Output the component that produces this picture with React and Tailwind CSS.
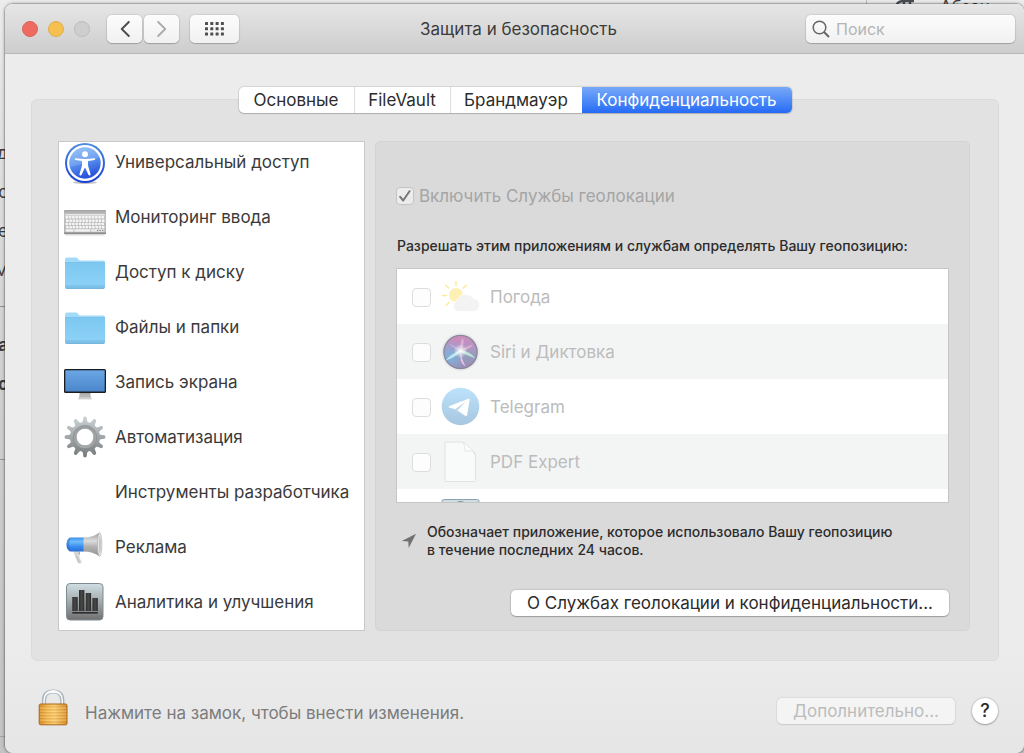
import React from "react";

function AccessibilityIcon() {
  return (
    <svg viewBox="0 0 42 40" className="h-10 w-[42px] overflow-visible" aria-hidden="true">
      <defs>
        <linearGradient id="accFill" x1="0" y1="0" x2="0.3" y2="1">
          <stop offset="0" stopColor="#8fc0f6" />
          <stop offset="0.5" stopColor="#5f97f0" />
          <stop offset="1" stopColor="#2a55dc" />
        </linearGradient>
        <linearGradient id="accRim" x1="0" y1="0" x2="0" y2="1">
          <stop offset="0" stopColor="#4f8ce0" />
          <stop offset="1" stopColor="#1a3fd0" />
        </linearGradient>
      </defs>
      <ellipse cx="21" cy="39.6" rx="12" ry="1.4" fill="#000" opacity="0.25" />
      <circle cx="21" cy="20" r="20" fill="url(#accRim)" />
      <circle cx="21" cy="20" r="18" fill="#fff" />
      <circle cx="21" cy="20" r="15.7" fill="url(#accFill)" />
      <path d="M6 24C16 22 27 18 36 14A15.7 15.7 0 0 0 6 18Z" fill="#fff" opacity="0.13" />
      <circle cx="21" cy="11.2" r="3" fill="#fff" />
      <path d="M11.5 15.3Q21 16.8 30.5 15.3Q31.3 15.3 31.3 16Q31.2 16.7 30.5 16.9L24 18V22.5L26.6 31.3Q26.6 32.5 25.5 32.5Q24.700 32.500 24.400 31.700L21.300 25H20.700L17.600 31.700Q17.300 32.500 16.500 32.500Q15.400 32.500 15.400 31.300L18 22.500V18L11.500 16.900Q10.800 16.700 10.700 16Q10.700 15.300 11.500 15.300Z" fill="#fff" />
    </svg>
  );
}

function KeyboardIcon() {
  const rows = [0, 1, 2, 3];
  const keys = [0, 1, 2, 3, 4, 5, 6, 7, 8, 9, 10, 11];
  return (
    <svg viewBox="0 0 42 40" className="h-10 w-[42px] overflow-visible" aria-hidden="true">
      <defs>
        <linearGradient id="kbFill" x1="0" y1="0" x2="0" y2="1">
          <stop offset="0" stopColor="#a3a3a3" />
          <stop offset="0.2" stopColor="#c4c4c4" />
          <stop offset="1" stopColor="#b4b4b4" />
        </linearGradient>
      </defs>
      <rect x="1" y="35" width="40" height="2.5" rx="1" fill="#000" opacity="0.15" />
      <rect x="0" y="12" width="42" height="24" rx="1" fill="url(#kbFill)" />
      <rect x="0" y="34.500" width="42" height="1.500" fill="#8e8e8e" />
      <rect x="1.500" y="16.200" width="39" height="1.200" fill="#f0f0f0" />
      {rows.map((r) =>
        keys.map((k) => (
          <rect key={`${r}-${k}`} x={1.6 + k * 3.26 + (r % 2) * 0.5} y={18.1 + r * 3.3} width="2.500" height="2.500" rx="0.400" fill="#f6f6f6" />
        ))
      )}
      <rect x="1.600" y="31.300" width="8" height="2.400" fill="#f4f4f4" />
      <rect x="10.300" y="31.300" width="16" height="2.400" fill="#f4f4f4" />
      <rect x="27" y="31.300" width="13.400" height="2.400" fill="#eee" />
      <path d="M33 32.500h1.500M35.500 32.500H37M38 32.500h1.500" stroke="#777" strokeWidth="0.800" />
    </svg>
  );
}

function FolderIcon() {
  return (
    <svg viewBox="0 0 42 40" className="h-10 w-[42px] overflow-visible" aria-hidden="true">
      <defs>
        <linearGradient id="folderFill" x1="0" y1="0" x2="0" y2="1">
          <stop offset="0" stopColor="#7cc8f1" />
          <stop offset="1" stopColor="#8fd2f7" />
        </linearGradient>
      </defs>
      <path d="M1 7V6.500Q1 4.500 3 4.500H12Q13.500 4.500 14.300 6Q15 7.500 16.500 7.500H39Q41 7.500 41 9.500V33Q41 35.500 39 35.500H3Q1 35.500 1 33Z" fill="#a3daf8" />
      <path d="M1 9.500H41V33.500Q41 35.800 39 35.800H3Q1 35.800 1 33.500Z" fill="url(#folderFill)" />
      <path d="M1 9.500H41" stroke="#72bde6" strokeWidth="0.700" />
      <path d="M1 32H41V33.500Q41 35.800 39 35.800H3Q1 35.800 1 33.500Z" fill="#7fc3e8" />
      <path d="M1.500 34.700Q2 35.800 3 35.800H39Q40 35.800 40.500 34.700Z" fill="#70b0d6" />
    </svg>
  );
}

function DisplayIcon() {
  return (
    <svg viewBox="0 0 42 40" className="h-10 w-[42px] overflow-visible" aria-hidden="true">
      <defs>
        <linearGradient id="screenFill" x1="0" y1="0" x2="0" y2="1">
          <stop offset="0" stopColor="#6ba6e6" />
          <stop offset="1" stopColor="#4a86c9" />
        </linearGradient>
        <linearGradient id="standFill" x1="0" y1="0" x2="0" y2="1">
          <stop offset="0" stopColor="#9c9c9c" />
          <stop offset="1" stopColor="#d9d9d9" />
        </linearGradient>
      </defs>
      <path d="M15.500 29H26.500V33L28 36.500H14L15.500 33Z" fill="url(#standFill)" />
      <path d="M15 33.500H27" stroke="#b0b0b0" strokeWidth="0.700" />
      <rect x="0" y="6" width="42" height="24" rx="1.500" fill="#1b1d20" />
      <rect x="1.300" y="7.300" width="39.400" height="21.200" fill="url(#screenFill)" />
    </svg>
  );
}

function GearIcon() {
  const teeth = [0, 30, 60, 90, 120, 150, 180, 210, 240, 270, 300, 330];
  return (
    <svg viewBox="0 0 42 40" className="h-10 w-[42px] overflow-visible" aria-hidden="true">
      <defs>
        <linearGradient id="gearFill" gradientUnits="userSpaceOnUse" x1="0" y1="0" x2="0" y2="40">
          <stop offset="0" stopColor="#c8d0d3" />
          <stop offset="0.5" stopColor="#a0a5a7" />
          <stop offset="1" stopColor="#747778" />
        </linearGradient>
        <linearGradient id="gearRing" x1="0" y1="0" x2="0" y2="1">
          <stop offset="0" stopColor="#989fa1" />
          <stop offset="1" stopColor="#a6a9aa" />
        </linearGradient>
        <mask id="gearMask">
          <rect x="-2" y="-2" width="46" height="44" fill="#fff" />
          <circle cx="21" cy="19" r="8.800" fill="#000" />
        </mask>
        <mask id="gearTeeth">
          <circle cx="21" cy="19" r="15" fill="#fff" />
          {teeth.map((a) => (
            <path key={a} d="M17.600 5.500Q19 4 19.300 -0.300Q19.500 -1.400 21 -1.400Q22.500 -1.400 22.700 -0.300Q23 4 24.400 5.500Z" fill="#fff" transform={`rotate(${a} 21 19)`} />
          ))}
        </mask>
      </defs>
      <g mask="url(#gearMask)">
        <rect x="-1" y="-2" width="44" height="43" fill="url(#gearFill)" mask="url(#gearTeeth)" />
        <circle cx="21" cy="19" r="10.200" fill="none" stroke="url(#gearRing)" strokeWidth="2.800" />
        <circle cx="21" cy="19" r="11.800" fill="none" stroke="#6f7577" strokeWidth="0.600" opacity="0.600" />
      </g>
      <circle cx="21" cy="19" r="8.800" fill="none" stroke="#858a8c" strokeWidth="0.600" />
    </svg>
  );
}

function MegaphoneIcon() {
  return (
    <svg viewBox="0 0 42 40" className="h-10 w-[42px] overflow-visible" aria-hidden="true">
      <defs>
        <linearGradient id="megaBlue" x1="0" y1="0" x2="0" y2="1">
          <stop offset="0" stopColor="#3d8fe6" />
          <stop offset="0.3" stopColor="#6fbdfa" />
          <stop offset="0.65" stopColor="#3a8df0" />
          <stop offset="1" stopColor="#2a6ed2" />
        </linearGradient>
        <linearGradient id="megaGrey" x1="0" y1="0" x2="0" y2="1">
          <stop offset="0" stopColor="#9a9a9a" />
          <stop offset="0.35" stopColor="#dcdcdc" />
          <stop offset="0.6" stopColor="#b0b0b0" />
          <stop offset="1" stopColor="#929292" />
        </linearGradient>
      </defs>
      <path d="M9 23H16L15.500 27Q14.800 29 17.500 33.500Q18 35 16.500 35.500H14.500Q13 34 12 30.500Z" fill="#d6d6d6" />
      <path d="M15.500 27L14.500 24.500H16Z" fill="#4a9bf0" />
      <path d="M12 28L15.500 34.500" stroke="#a9a9a9" strokeWidth="0.700" />
      <path d="M20 9.500H6Q2.500 11.500 2.500 16.500Q2.500 21.500 6 23.500H20Z" fill="url(#megaBlue)" />
      <path d="M6 9.500Q2.500 11.500 2.500 16.500Q2.500 21.500 6 23.500Q4.500 16.500 6 9.500Z" fill="#1d5cb8" opacity="0.400" />
      <path d="M19.500 9.500Q29 9.500 35.500 4.500V28.500Q29 23.500 19.500 23.500Z" fill="url(#megaGrey)" />
      <ellipse cx="35.600" cy="16.500" rx="2.200" ry="12" fill="#e3e3e3" stroke="#ababab" strokeWidth="0.600" />
      <ellipse cx="35.900" cy="16.500" rx="0.900" ry="8.500" fill="#c4c4c4" />
    </svg>
  );
}

function AnalyticsIcon() {
  return (
    <svg viewBox="0 0 42 40" className="h-10 w-[42px] overflow-visible" aria-hidden="true">
      <defs>
        <linearGradient id="anaFill" x1="0" y1="0" x2="0" y2="1">
          <stop offset="0" stopColor="#cfdee3" />
          <stop offset="0.5" stopColor="#a3aaac" />
          <stop offset="1" stopColor="#707070" />
        </linearGradient>
        <linearGradient id="anaBar" x1="0" y1="0" x2="1" y2="0">
          <stop offset="0" stopColor="#2e2e2e" />
          <stop offset="0.5" stopColor="#484848" />
          <stop offset="1" stopColor="#2a2a2a" />
        </linearGradient>
      </defs>
      <rect x="2.500" y="0.500" width="36.500" height="36.500" rx="3.500" fill="url(#anaFill)" stroke="#7f8b92" />
      <rect x="8.300" y="14" width="5.400" height="14" fill="url(#anaBar)" />
      <rect x="15" y="7" width="5.400" height="21" fill="url(#anaBar)" />
      <rect x="21.700" y="10" width="5.400" height="18" fill="url(#anaBar)" />
      <rect x="28.400" y="15" width="5.400" height="13" fill="url(#anaBar)" />
      <rect x="8.300" y="29" width="25.500" height="1.600" fill="#2c2c2c" />
    </svg>
  );
}

function WeatherIcon() {
  return (
    <svg viewBox="0 0 40 40" className="size-10 overflow-visible" aria-hidden="true">
      <circle cx="15" cy="18" r="7" fill="#fdf0b4" />
      <path d="M15 4.500V8.500M4.800 8.200L7.600 11M25.200 8.200L22.400 11M1.500 18.500H5.500M5.300 28.200L8 25.500" stroke="#fceba0" strokeWidth="1.600" strokeLinecap="round" />
      <path d="M17 34.500A5.500 5.500 0 0 1 16 23.900A9.300 9.300 0 0 1 32.500 21.500A6.600 6.600 0 0 1 33.500 34.500Z" fill="#f3f3f4" stroke="#fff" strokeWidth="0.800" />
    </svg>
  );
}

function SiriIcon() {
  return (
    <svg viewBox="0 0 40 40" className="size-10 overflow-visible" aria-hidden="true">
      <defs>
        <linearGradient id="siriFill" x1="0" y1="0" x2="0" y2="1">
          <stop offset="0" stopColor="#cf8cba" />
          <stop offset="0.35" stopColor="#b395c4" />
          <stop offset="0.6" stopColor="#949eba" />
          <stop offset="1" stopColor="#9a8cb8" />
        </linearGradient>
        <radialGradient id="siriBlue" cx="0.15" cy="0.65" r="0.5">
          <stop offset="0" stopColor="#7fb2e0" />
          <stop offset="1" stopColor="#7fb2e0" stopOpacity="0" />
        </radialGradient>
        <radialGradient id="siriGlow">
          <stop offset="0" stopColor="#fff" />
          <stop offset="1" stopColor="#fff" stopOpacity="0" />
        </radialGradient>
      </defs>
      <circle cx="19.500" cy="20" r="18.500" fill="#eceeef" stroke="#dfe1e2" strokeWidth="0.600" />
      <circle cx="19.500" cy="20" r="16.600" fill="url(#siriFill)" stroke="#8b8698" strokeWidth="1.400" />
      <circle cx="19.500" cy="20" r="16" fill="url(#siriBlue)" />
      <path d="M19.500 19Q11 12 8 12Q14 17 19.500 19Q19 8 22 6Q24 12 19.500 19Q28 12 32 13Q27 18 19.500 19Z" fill="#efbdd9" opacity="0.700" />
      <path d="M19.500 18Q10 22 4.500 28.500Q13 26 19.500 20Z" fill="#c6eef0" opacity="0.900" />
      <path d="M19.500 18Q29 19 34.500 26.500Q26 23.500 19.500 20Z" fill="#bfeadb" opacity="0.900" />
      <path d="M19.500 20Q21 28 24.500 34.500Q18 31 19.500 20Z" fill="#f1bfe5" />
      <circle cx="19.500" cy="19" r="7" fill="url(#siriGlow)" />
    </svg>
  );
}

function TelegramIcon() {
  return (
    <svg viewBox="0 0 40 40" className="size-10 overflow-visible" aria-hidden="true">
      <defs>
        <linearGradient id="tgFill" x1="0" y1="0" x2="0" y2="1">
          <stop offset="0" stopColor="#bce2fb" />
          <stop offset="1" stopColor="#a7c6df" />
        </linearGradient>
      </defs>
      <circle cx="19.500" cy="19.500" r="18.800" fill="url(#tgFill)" />
      <path d="M8 19.200L27.300 11.800Q28.900 11.400 28.600 12.900L26.200 28Q25.800 29.700 24.300 28.700L14.300 22.200L8 20.400Q6.800 19.800 8 19.200Z" fill="#fff" />
      <path d="M14.300 22.200L24.500 14.800L16.500 23.600L15.300 26.500Z" fill="#b9d6ec" />
    </svg>
  );
}

function DocumentIcon() {
  return (
    <svg viewBox="0 0 40 40" className="size-10 overflow-visible" aria-hidden="true">
      <path d="M5 0H21Q24 1 29 6Q34 10 34.500 13.500V38.500Q34.500 39.500 33.500 39.500H5Q4 39.500 4 38.500V1Q4 0 5 0Z" fill="#f9fafa" stroke="#e0e2e2" />
      <path d="M21.500 0.300Q24 2 24 9H31.500Q34 10 34.400 13.500Q32 8 28 5Q25 1.500 21.500 0.300Z" fill="#fdfdfd" stroke="#dfe1e1" strokeWidth="0.800" />
    </svg>
  );
}

function PartialIcon() {
  return (
    <svg viewBox="0 0 40 40" className="size-10 overflow-visible" aria-hidden="true">
      <rect x="1" y="1.500" width="37" height="37" rx="1.500" fill="#cfdde3" stroke="#8fa3ac" />
      <ellipse cx="19.500" cy="6" rx="5" ry="3" fill="#7f929b" />
    </svg>
  );
}

function LockIcon() {
  return (
    <svg viewBox="0 0 30 38" className="h-[38px] w-[30px]" aria-hidden="true">
      <defs>
        <linearGradient id="lockBody" x1="0" y1="0" x2="1" y2="0">
          <stop offset="0" stopColor="#d88c2c" />
          <stop offset="0.3" stopColor="#f4bd55" />
          <stop offset="0.55" stopColor="#fbd074" />
          <stop offset="1" stopColor="#d9902f" />
        </linearGradient>
        <linearGradient id="lockBar" x1="0" y1="0" x2="1" y2="0">
          <stop offset="0" stopColor="#a5b0b9" />
          <stop offset="0.5" stopColor="#f4f6f8" />
          <stop offset="1" stopColor="#a5b0b9" />
        </linearGradient>
      </defs>
      <path d="M6 17V12.500Q6 3.500 15.200 3.500Q24.300 3.500 24.300 12.500V17" fill="none" stroke="#a7b2bb" strokeWidth="4.200" />
      <path d="M6 17V12.500Q6 3.500 15.200 3.500Q24.300 3.500 24.300 12.500V17" fill="none" stroke="url(#lockBar)" strokeWidth="3" />
      <path d="M6 17V12.500Q6 3.500 15.200 3.500Q24.300 3.500 24.300 12.500V17" fill="none" stroke="#fff" strokeWidth="1.400" />
      <rect x="1.200" y="16" width="27.800" height="20.800" rx="1.500" fill="url(#lockBody)" stroke="#a8641c" />
      <path d="M2 19H28.500M2 22H28.500M2 25H28.500M2 28H28.500M2 31H28.500M2 34H28.500" stroke="#bf7c26" strokeWidth="0.900" opacity="0.500" />
      <path d="M2 20H28.500M2 23H28.500M2 26H28.500M2 29H28.500M2 32H28.500" stroke="#ffe29a" strokeWidth="0.700" opacity="0.700" />
    </svg>
  );
}

const categories = [
  { name: "Универсальный доступ", Icon: AccessibilityIcon },
  { name: "Мониторинг ввода", Icon: KeyboardIcon },
  { name: "Доступ к диску", Icon: FolderIcon },
  { name: "Файлы и папки", Icon: FolderIcon },
  { name: "Запись экрана", Icon: DisplayIcon },
  { name: "Автоматизация", Icon: GearIcon },
  { name: "Инструменты разработчика", Icon: null },
  { name: "Реклама", Icon: MegaphoneIcon },
  { name: "Аналитика и улучшения", Icon: AnalyticsIcon },
];

const apps = [
  { name: "Погода", Icon: WeatherIcon },
  { name: "Siri и Диктовка", Icon: SiriIcon },
  { name: "Telegram", Icon: TelegramIcon },
  { name: "PDF Expert", Icon: DocumentIcon },
];

const toolButton =
  "flex h-7 items-center justify-center rounded-[5px] bg-linear-to-b from-[#fcfcfc] to-[#f1f1f1] shadow-[0_0_1px_1px_rgba(0,0,0,0.08),0_1px_1px_rgba(0,0,0,0.18)]";

function Backdrop() {
  return (
    <div className="absolute inset-0 overflow-hidden bg-linear-to-b from-[#ececec] via-[#d2d2d2] to-[#c4c4c4] text-[17px] leading-5 text-[#3b3d42]" aria-hidden="true">
      <div className="absolute left-[866px] top-0 h-1 w-px bg-[#bbb]" />
      <svg viewBox="0 0 20 20" className="absolute left-[895px] top-0 size-5" fill="none" stroke="#4a4c54" strokeWidth="2.400">
        <path d="M9 12Q1 12 1.500 6Q2 1 9 1H19M9 1V18M15 1V18" />
      </svg>
      <div className="absolute -top-[3px] left-[940px]">Абзац</div>
      <div className="absolute left-0 top-[143px] flex w-[8px] flex-col items-end gap-[19px]">
        <span>д</span>
        <span>с</span>
        <span>е</span>
        <span>м</span>
      </div>
      <div className="absolute left-0 top-[335px] flex w-[8px] flex-col items-end gap-[19px] font-bold">
        <span>а</span>
        <span>с</span>
      </div>
      <div className="absolute left-0 top-[306px] h-px w-2 bg-[#8d949c]" />
      <div className="absolute left-0 top-[459px] h-px w-2 bg-[#8d949c]" />
      <div className="absolute left-0 top-[736px] h-px w-2 bg-[#a5a5a5]" />
    </div>
  );
}

function TitleBar() {
  return (
    <header className="grid h-[50px] grid-cols-[1fr_auto_1fr] items-center border-b border-[#b8b8b8] bg-linear-to-b from-[#e6e6e6] to-[#cdcdcd] pl-[17px] pr-[9px]">
      <div className="flex items-center">
        <div className="flex gap-[10px]">
          <button aria-label="Закрыть" className="size-4 rounded-full border border-[#e0605a] bg-[#ed6b60]" />
          <button aria-label="Свернуть" className="size-4 rounded-full border border-[#e0ae46] bg-[#f5c04f]" />
          <button aria-label="Развернуть" className="size-4 rounded-full border border-[#bcbcbc] bg-[#cecece]" />
        </div>
        <div className="ml-[17px] flex gap-[2px]">
          <button aria-label="Назад" className={`${toolButton} w-[35px]`}>
            <svg viewBox="0 0 10 16" className="h-4 w-[10px]" fill="none" stroke="#4c4c4c" strokeWidth="1.900" strokeLinecap="round" strokeLinejoin="round">
              <path d="M8.800 1L1.800 8L8.800 15" />
            </svg>
          </button>
          <button aria-label="Вперед" className={`${toolButton} w-[35px]`}>
            <svg viewBox="0 0 10 16" className="h-4 w-[10px]" fill="none" stroke="#ababab" strokeWidth="1.900" strokeLinecap="round" strokeLinejoin="round">
              <path d="M1.200 1L8.200 8L1.200 15" />
            </svg>
          </button>
        </div>
        <button aria-label="Показать все" className={`${toolButton} ml-[11px] w-[49px]`}>
          <svg viewBox="0 0 19 14" className="h-[14px] w-[19px]" fill="#4f4f4f">
            {[0, 1, 2].map((r) =>
              [0, 1, 2, 3].map((c) => <rect key={`${r}${c}`} x={c * 5.3} y={r * 5.3} width="3" height="3" rx="0.500" />)
            )}
          </svg>
        </button>
      </div>
      <h1 className="text-[17px] leading-5 text-[#3c3c3c]">Защита и безопасность</h1>
      <label className={`${toolButton} w-[209px] justify-self-end pl-[6px]`}>
        <svg viewBox="0 0 18 18" className="size-[18px] shrink-0" fill="none" stroke="#666" strokeWidth="1.500" aria-hidden="true">
          <circle cx="7.500" cy="7.500" r="6.300" />
          <path d="M12 12L17 17" strokeWidth="1.900" />
        </svg>
        <input type="search" aria-label="Поиск" placeholder="Поиск" className="ml-[6px] w-full min-w-0 bg-transparent text-[16px] leading-5 outline-none placeholder:text-[#b4b4b4]" />
      </label>
    </header>
  );
}

function Tabs() {
  return (
    <div role="tablist" className="relative mx-auto flex h-[26px] w-fit rounded-[5px] bg-white text-[17px] leading-5 text-[#2c2c2c] shadow-[0_0_1px_1px_rgba(0,0,0,0.1),0_1px_1px_rgba(0,0,0,0.15)]">
      <button role="tab" aria-selected="false" className="w-[116px] border-r border-[#dedede]">Основные</button>
      <button role="tab" aria-selected="false" className="w-[96px] border-r border-[#dedede]">FileVault</button>
      <button role="tab" aria-selected="false" className="w-[131px]">Брандмауэр</button>
      <button role="tab" aria-selected="true" className="w-[210px] rounded-r-[5px] bg-linear-to-b from-[#78a9f8] to-[#256af5] text-white">Конфиденциальность</button>
    </div>
  );
}

function CategoryList() {
  return (
    <ul className="flex w-[307px] shrink-0 flex-col gap-[15px] border border-[#c8c8c8] bg-white pt-px pb-[7px] text-[17px] leading-5 text-[#3a3a3a]">
      {categories.map(({ name, Icon }) => (
        <li key={name}>
          <button className="flex h-10 w-full items-center gap-[9px] pl-[5px] text-left">
            <span className="h-10 w-[42px] shrink-0">{Icon && <Icon />}</span>
            <span className="whitespace-nowrap pb-[3px]">{name}</span>
          </button>
        </li>
      ))}
    </ul>
  );
}

function LocationPane() {
  return (
    <section className="flex min-w-0 flex-1 flex-col rounded-[5px] border border-[#d3d3d3] bg-[#dadada] px-[20px] pt-[44px] pb-[13px]">
      <label className="flex items-center gap-[5px] text-[17px] leading-5 text-[#a5a5a5]">
        <span className="grid size-[18px] place-items-center *:col-start-1 *:row-start-1">
          <input type="checkbox" defaultChecked disabled className="size-[18px] appearance-none rounded-[4px] border border-[#c4c4c4] bg-[#ececec]" />
          <svg viewBox="0 0 12 12" className="size-3" fill="none" stroke="#777" strokeWidth="2" strokeLinecap="round" strokeLinejoin="round" aria-hidden="true">
            <path d="M1.200 6.800L4.200 10.500L10.500 1.200" />
          </svg>
        </span>
        Включить Службы геолокации
      </label>
      <p className="mt-[31px] pl-px text-[14px] leading-[18px] font-medium text-[#2c2c2c]">Разрешать этим приложениям и службам определять Вашу геопозицию:</p>
      <ul className="mt-[13px] h-[235px] overflow-hidden border border-[#c6c6c6] bg-white text-[17px] leading-5 text-[#bcbcbc]">
        {apps.map(({ name, Icon }) => (
          <li key={name} className="h-[55px] even:bg-[#f3f5f5]">
            <label className="flex h-full items-center pl-[15px]">
              <input type="checkbox" disabled className="mt-[2px] size-[19px] appearance-none rounded-[4px] border border-[#dcdddd] bg-[#fdfdfd]" />
              <span className="ml-[10px]"><Icon /></span>
              <span className="ml-[9px]">{name}</span>
            </label>
          </li>
        ))}
        <li className="flex h-[55px] items-center pl-[44px] pt-[2px]">
          <PartialIcon />
        </li>
      </ul>
      <div className="mt-[20px] flex items-center gap-[10px] pl-[5px]">
        <svg viewBox="0 0 16 16" className="size-4 shrink-0" fill="#717171" aria-hidden="true">
          <path d="M15 0.800L7.700 15L7.300 8.600L0.800 8Z" />
        </svg>
        <p className="text-[14px] leading-[18px] font-medium text-[#2c2c2c]">
          Обозначает приложение, которое использовало Вашу геопозицию
          <br />в течение последних 24 часов.
        </p>
      </div>
      <button className="mt-[31px] h-[26px] self-end rounded-[5px] bg-white px-[16px] text-[17px] leading-5 text-[#2b2b2b] shadow-[0_0_1px_1px_rgba(0,0,0,0.1),0_1px_1px_rgba(0,0,0,0.2)]">
        О Службах геолокации и конфиденциальности...
      </button>
    </section>
  );
}

export default function App() {
  return (
    <div className="relative flex min-h-screen flex-col pl-[5px] pt-[4px] font-['Inter','Liberation_Sans',sans-serif]">
      <Backdrop />
      <main className="relative flex flex-1 flex-col overflow-hidden rounded-[8px] bg-linear-to-b from-[#ececec] from-85% to-[#e6e6e6] shadow-[0_0_1px_1px_rgba(0,0,0,0.2),0_0_4px_rgba(0,0,0,0.3)]">
        <TitleBar />
        <div className="flex flex-1 flex-col pl-[26px] pr-[25px] pt-[33px]">
          <Tabs />
          <div className="-mt-[14px] flex gap-[10px] rounded-[6px] border border-[#dbdbdb] bg-[#e2e2e2] pb-[29px] pl-[26px] pr-[28px] pt-[41px]">
            <CategoryList />
            <LocationPane />
          </div>
          <footer className="mt-[27px] flex items-center pl-[7px] pr-px">
            <LockIcon />
            <p className="ml-[17px] mt-[12px] text-[17px] leading-5 text-[#7c7c7c]">Нажмите на замок, чтобы внести изменения.</p>
            <button disabled className="ml-auto mt-[8px] h-[26px] w-[178px] rounded-[5px] bg-[#f4f4f4] text-[17px] leading-5 text-[#bcbcbc] shadow-[0_0_1px_1px_rgba(0,0,0,0.06),0_1px_1px_rgba(0,0,0,0.08)]">
              Дополнительно...
            </button>
            <button aria-label="Справка" className="ml-[17px] mt-[8px] size-[26px] rounded-full bg-white text-[18px] leading-5 font-medium text-[#2b2b2b] shadow-[0_0_1px_1px_rgba(0,0,0,0.1),0_1px_2px_rgba(0,0,0,0.25)]">
              ?
            </button>
          </footer>
        </div>
      </main>
    </div>
  );
}
